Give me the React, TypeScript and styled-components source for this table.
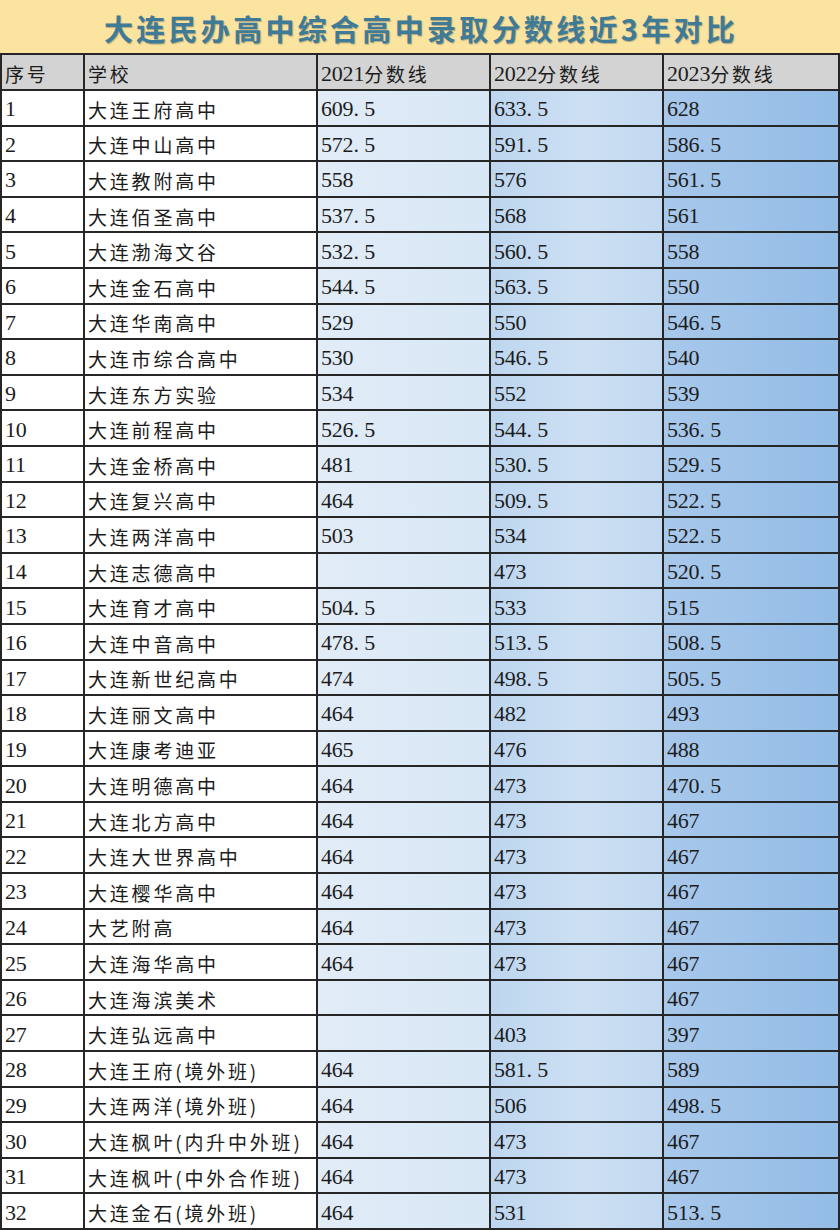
import React from 'react';
import styled, { createGlobalStyle } from 'styled-components';

const GlobalStyle = createGlobalStyle`
  html, body {
    margin: 0;
    padding: 0;
    background: #ffffff;
  }
  body {
    width: 840px;
    height: 1230px;
    overflow: hidden;
  }
`;

const Page = styled.div`
  width: 840px;
  height: 1230px;
  display: flex;
  flex-direction: column;
  background: #fff;
`;

const TitleBar = styled.div`
  height: 53px;
  box-sizing: border-box;
  padding-top: 4px;
  background: #fbe3a0;
  display: flex;
  align-items: center;
  justify-content: center;
`;

const Title = styled.h1`
  margin: 0 0 0 2px;
  font-family: "Noto Sans CJK SC", sans-serif;
  font-size: 29px;
  font-weight: 700;
  letter-spacing: 3.3px;
  color: #3f7b97;
  text-shadow: 1px 1px 1px rgba(20, 40, 50, 0.3);
  line-height: 1;
`;

const Sheet = styled.div`
  flex: 1;
  display: grid;
  grid-template-columns: 83px 233px 173px 173px 1fr;
  grid-template-rows: 36px repeat(32, 1fr);
  border-top: 2px solid #262626;
  border-left: 2px solid #262626;
  box-sizing: border-box;
`;

type Tone = 'head' | 'plain' | 'y21' | 'y22' | 'y23';

const fills: Record<Tone, string> = {
  head: '#d4d3d3',
  plain: '#ffffff',
  y21: 'linear-gradient(to right, #e1ecf7, #d8e7f5)',
  y22: 'linear-gradient(to right, #bdd6ef, #cde0f3 55%, #c1d8f0)',
  y23: 'linear-gradient(to right, #a8c8eb, #93bce6)',
};

const Cell = styled.div<{ $tone: Tone }>`
  display: flex;
  align-items: center;
  box-sizing: border-box;
  padding: 3px 0 0 3px;
  border-right: 2px solid #262626;
  border-bottom: 2px solid #262626;
  background: ${(p) => fills[p.$tone]};
  color: #1c1c1c;
  white-space: nowrap;
  overflow: hidden;
`;

const Num = styled.span`
  font-family: "Liberation Serif", serif;
  font-size: 22px;
  letter-spacing: -0.2px;
`;

// 宋体里小数点占一个数字宽度
const Dot = styled.span`
  display: inline-block;
  width: 10.8px;
`;

const Han = styled.span`
  font-family: "Noto Sans CJK SC", sans-serif;
  font-size: 19px;
  letter-spacing: 2.8px;
  font-weight: 400;
`;

const Score = ({ value }: { value: string }) => {
  const [a, b] = value.split('.');
  return (
    <Num>
      {a}
      {b !== undefined && (
        <>
          <Dot>.</Dot>
          {b}
        </>
      )}
    </Num>
  );
};

const rows: [string, string, string, string][] = [
  ['大连王府高中', '609.5', '633.5', '628'],
  ['大连中山高中', '572.5', '591.5', '586.5'],
  ['大连教附高中', '558', '576', '561.5'],
  ['大连佰圣高中', '537.5', '568', '561'],
  ['大连渤海文谷', '532.5', '560.5', '558'],
  ['大连金石高中', '544.5', '563.5', '550'],
  ['大连华南高中', '529', '550', '546.5'],
  ['大连市综合高中', '530', '546.5', '540'],
  ['大连东方实验', '534', '552', '539'],
  ['大连前程高中', '526.5', '544.5', '536.5'],
  ['大连金桥高中', '481', '530.5', '529.5'],
  ['大连复兴高中', '464', '509.5', '522.5'],
  ['大连两洋高中', '503', '534', '522.5'],
  ['大连志德高中', '', '473', '520.5'],
  ['大连育才高中', '504.5', '533', '515'],
  ['大连中音高中', '478.5', '513.5', '508.5'],
  ['大连新世纪高中', '474', '498.5', '505.5'],
  ['大连丽文高中', '464', '482', '493'],
  ['大连康考迪亚', '465', '476', '488'],
  ['大连明德高中', '464', '473', '470.5'],
  ['大连北方高中', '464', '473', '467'],
  ['大连大世界高中', '464', '473', '467'],
  ['大连樱华高中', '464', '473', '467'],
  ['大艺附高', '464', '473', '467'],
  ['大连海华高中', '464', '473', '467'],
  ['大连海滨美术', '', '', '467'],
  ['大连弘远高中', '', '403', '397'],
  ['大连王府(境外班)', '464', '581.5', '589'],
  ['大连两洋(境外班)', '464', '506', '498.5'],
  ['大连枫叶(内升中外班)', '464', '473', '467'],
  ['大连枫叶(中外合作班)', '464', '473', '467'],
  ['大连金石(境外班)', '464', '531', '513.5'],
];

// 表头 "2021分数线" 这种数字+汉字混排
const YearHead = ({ year }: { year: string }) => (
  <Cell $tone="head">
    <Num>{year}</Num>
    <Han>分数线</Han>
  </Cell>
);

const App = () => {
  return (
    <>
      <GlobalStyle />
      <Page>
        <TitleBar>
          <Title>大连民办高中综合高中录取分数线近3年对比</Title>
        </TitleBar>
        <Sheet>
          <Cell $tone="head"><Han>序号</Han></Cell>
          <Cell $tone="head"><Han>学校</Han></Cell>
          <YearHead year="2021" />
          <YearHead year="2022" />
          <YearHead year="2023" />
          {rows.map((r, idx) => (
            <React.Fragment key={idx}>
              <Cell $tone="plain"><Num>{idx + 1}</Num></Cell>
              <Cell $tone="plain"><Han>{r[0]}</Han></Cell>
              <Cell $tone="y21"><Score value={r[1]} /></Cell>
              <Cell $tone="y22"><Score value={r[2]} /></Cell>
              <Cell $tone="y23"><Score value={r[3]} /></Cell>
            </React.Fragment>
          ))}
        </Sheet>
      </Page>
    </>
  );
};

export default App;
